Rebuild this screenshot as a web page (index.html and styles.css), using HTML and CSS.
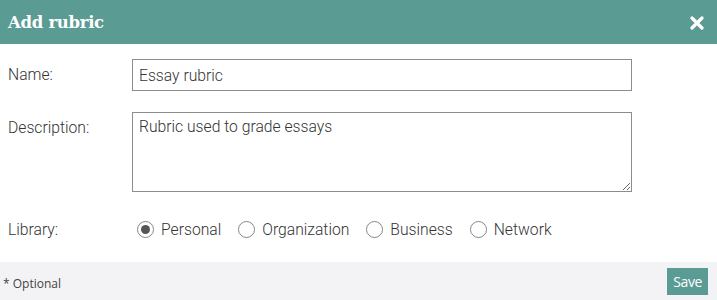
FILE: index.html
```html
<!DOCTYPE html>
<html>
  <head>
    <meta http-equiv="Content-Type" content="text/html; charset=utf-8"/>
    <link rel="stylesheet" href="styles.css">
  </head>
  <body>
    <div class="dialog">
      <div class="header">
        <h1 class="title">Add rubric</h1>
        <span class="close">
          <svg width="14" height="14" viewBox="0 0 14 14">
            <path d="M2 2 L12 12 M12 2 L2 12" stroke="#fff" stroke-width="3.2" stroke-linecap="round"/>
          </svg>
        </span>
      </div>
      <form class="body">
        <div class="row row-name">
          <label class="label" for="name">Name:</label>
          <input class="field" type="text" id="name" value="Essay rubric" />
        </div>
        <div class="row row-desc">
          <label class="label" for="desc">Description:</label>
          <textarea class="field area" id="desc">Rubric used to grade essays</textarea>
        </div>
        <div class="row row-lib">
          <span class="label">Library:</span>
          <div class="radios">
            <label class="radio"><span class="dot checked"></span>Personal</label>
            <label class="radio"><span class="dot"></span>Organization</label>
            <label class="radio"><span class="dot"></span>Business</label>
            <label class="radio"><span class="dot"></span>Network</label>
          </div>
        </div>
      </form>
      <div class="footer">
        <span class="optional">* Optional</span>
        <span class="save">Save</span>
      </div>
    </div>
  </body>
</html>
```

FILE: styles.css
```css
body {
  margin: 0px;
  padding: 0px;
  background: white;
  font-family: Roboto, sans-serif;
  color: #444444;
}

.dialog {
  width: 717px;
  height: 300px;
  display: flex;
  flex-direction: column;
}

.header {
  height: 44px;
  background: #5a9b94;
  display: flex;
  align-items: center;
  justify-content: space-between;
  padding: 0px 13px 0px 8px;
}

.title {
  margin: 0px;
  font-family: "DejaVu Serif", serif;
  font-weight: bold;
  font-size: 16.5px;
  color: white;
  letter-spacing: -0.3px;
}

.close {
  display: flex;
  padding-top: 1px;
}

.body {
  flex: 1;
  margin: 0px;
  padding: 15px 0px 0px 8px;
}

.row {
  display: flex;
  align-items: flex-start;
}

.label {
  width: 124px;
  font-size: 15.7px;
  font-weight: 300;
  color: #333333;
}

.row-name .label {
  padding-top: 6px;
}

.row-desc {
  margin-top: 21px;
}

.row-desc .label {
  padding-top: 6px;
}

.field {
  box-sizing: border-box;
  width: 500px;
  height: 32px;
  border: 1px solid #8c8c8c;
  margin: 0px;
  padding: 0px 6px;
  font-family: Roboto, sans-serif;
  font-size: 15.7px;
  font-weight: 300;
  color: #333333;
  outline: none;
}

.area {
  height: 80px;
  padding: 4px 6px;
  resize: vertical;
}

.row-lib {
  margin-top: 28px;
  align-items: center;
}

.radios {
  display: flex;
  gap: 17px;
  padding-left: 5px;
}

.radio {
  display: flex;
  align-items: center;
  gap: 7px;
  font-size: 15.7px;
  font-weight: 300;
  color: #333333;
}

.dot {
  box-sizing: border-box;
  width: 17px;
  height: 17px;
  border: 1px solid #888888;
  border-radius: 50%;
  display: flex;
  align-items: center;
  justify-content: center;
}

.dot.checked::after {
  content: "";
  width: 9px;
  height: 9px;
  border-radius: 50%;
  background: #555555;
}

.footer {
  height: 38px;
  background: #f3f2f5;
  display: flex;
  align-items: center;
  justify-content: space-between;
  padding: 0px 9px 0px 3px;
}

.optional {
  font-family: "Open Sans", sans-serif;
  font-size: 12px;
  color: #444444;
  padding-top: 4px;
}

.save {
  background: #5a9b94;
  color: white;
  font-family: "Open Sans", sans-serif;
  font-size: 14px;
  padding: 4px 6px 4px 6px;
  letter-spacing: -0.4px;
}
```
